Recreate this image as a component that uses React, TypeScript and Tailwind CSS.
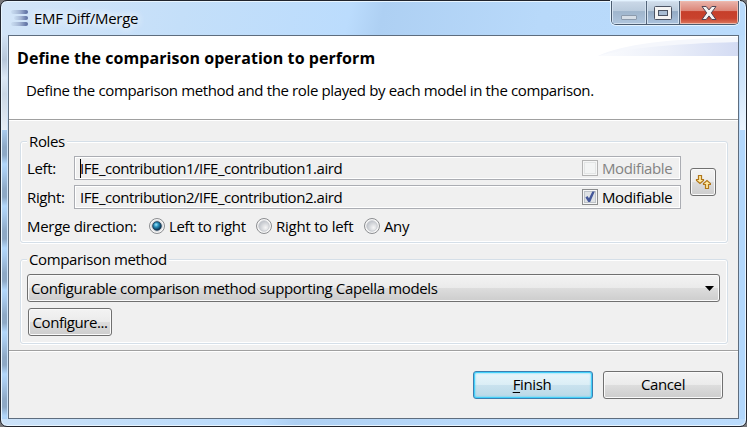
import type { ReactNode } from "react";

function Radio({ checked, label, className }: { checked?: boolean; label: string; className: string }) {
  return (
    <div className={`flex shrink-0 items-center gap-1 ${className}`}>
      <svg width="16" height="16" viewBox="0 0 16 16" className="shrink-0">
        <defs>
          <radialGradient id="radioOff" cx="0.65" cy="0.65" r="0.7">
            <stop offset="0" stopColor="#f6f6f6" />
            <stop offset="1" stopColor="#bcc0c7" />
          </radialGradient>
          <radialGradient id="radioOn" cx="0.4" cy="0.35" r="0.65">
            <stop offset="0" stopColor="#a5e5fa" />
            <stop offset="0.4" stopColor="#2a93bf" />
            <stop offset="1" stopColor="#0a2c4c" />
          </radialGradient>
        </defs>
        <circle cx="8" cy="8" r="7.5" fill="#f6f6f6" stroke="#8b8d90" />
        <circle cx="8" cy="8" r="5.3" fill="url(#radioOff)" stroke="#c5c8cd" strokeWidth="0.8" />
        {checked && <circle cx="8" cy="8" r="4.3" fill="url(#radioOn)" stroke="#123451" strokeWidth="0.8" />}
      </svg>
      <span className="whitespace-nowrap">{label}</span>
    </div>
  );
}

function Check({ checked }: { checked?: boolean }) {
  return (
    <svg width="16" height="16" viewBox="0 0 16 16" className="shrink-0">
      <rect x="0.5" y="0.5" width="15" height="15" fill="#f6f6f6" stroke={checked ? "#8c8d8e" : "#b3b3b3"} />
      <rect x="2.5" y="2.5" width="11" height="11" fill={checked ? "#dfe2e5" : "#f3f4f4"} stroke={checked ? "#bec3c9" : "#e3e5e5"} />
      {checked && <path d="M3.4 8.5 L5.4 7 L7 9.3 L10.3 2.6 L12.8 2.4 L8.2 13 L6.3 13 Z" fill="#45589a" />}
    </svg>
  );
}

function Group({ title, className, children }: { title: string; className: string; children: ReactNode }) {
  return (
    <fieldset className={`relative ml-[11px] w-[708px] rounded-[3px] border border-[#d5dfe8] shadow-[inset_0_0_0_1px_#fff,0_1px_0_#fff] ${className}`}>
      <div className="absolute -top-[11px] left-[6px] h-5 whitespace-nowrap bg-[#f0f0f0] pl-[2px] pr-[2px] leading-5">{title}</div>
      {children}
    </fieldset>
  );
}

function ModelField({ path, checked, caret }: { path: string; checked?: boolean; caret?: boolean }) {
  return (
    <div className="flex h-6 w-[607px] items-center border border-[#abadb3] pl-[5px] pr-[4px] shadow-[inset_0_0_0_1px_#fff]">
      {caret ? <div className="-mr-px h-[19px] w-px bg-black" /> : null}
      <span className="grow whitespace-nowrap tracking-[-0.46px]">{path}</span>
      <Check checked={checked} />
      <span className={`ml-[4px] w-[74px] whitespace-nowrap ${checked ? "text-black" : "text-[#838383]"}`}>Modifiable</span>
    </div>
  );
}

const face = "bg-[linear-gradient(#f3f3f3_0%,#ebebeb_48%,#dddddd_50%,#cdcdcd_100%)] border border-[#707070] shadow-[inset_0_0_0_1px_#fafafa]";

export default function App() {
  return (
    <div className="h-[427px] w-[747px] overflow-hidden bg-[#77777a] font-['Open_Sans','Noto_Sans',sans-serif] text-[15px] leading-5 tracking-[-0.37px] text-black">
      <div className="flex h-[427px] w-[747px] flex-col rounded-[7px] border border-[#20242d] bg-[linear-gradient(102deg,#d3e5f8_0%,#c4dff9_22%,#bbdcfd_42%,#aed0f3_46%,#b8d9fa_65%,#bbdcfd_100%)] shadow-[inset_0_0_0_1px_#e8f5ff]">
        <div className="flex h-[34px] shrink-0 items-start justify-between pl-[10px] pr-[7px]">
          <div className="flex pt-2">
            <svg width="18" height="18" viewBox="0 0 18 18">
              <defs>
                <linearGradient id="bars">
                  <stop offset="0" stopColor="#b4c8df" stopOpacity="0.3" />
                  <stop offset="0.5" stopColor="#a3b4d3" />
                  <stop offset="1" stopColor="#56699e" />
                </linearGradient>
              </defs>
              <rect x="0" y="1" width="17" height="4" rx="2" fill="url(#bars)" />
              <rect x="3" y="7" width="14" height="4" rx="2" fill="url(#bars)" />
              <rect x="0" y="13" width="17" height="4" rx="2" fill="url(#bars)" />
            </svg>
            <span className="-mt-px ml-[5px] whitespace-nowrap tracking-[-0.3px] [text-shadow:0_0_8px_#fff,0_0_10px_#fff]">EMF Diff/Merge</span>
          </div>
          <div className="flex h-6 w-[128px] overflow-hidden rounded-b-[5px] border border-t-0 border-[#4b5c70] shadow-[0_0_0_1px_#e4f3ff]">
            <div className="flex w-[35px] items-center justify-center border-r border-[#526479] bg-[linear-gradient(#cbd9e8_0%,#bacbdd_42%,#9fb5cc_46%,#b0c6de_100%)] pt-[9px] shadow-[inset_0_0_0_1px_#d4e2f0]">
              <div className="h-[5px] w-4 rounded-[1px] border border-[#8c9bad] bg-[#d6dee7]" />
            </div>
            <div className="flex w-[33px] items-center justify-center border-r border-[#526479] bg-[linear-gradient(#d2deeb_0%,#b9cadb_42%,#93aac3_46%,#abc3de_100%)] shadow-[inset_0_0_0_1px_#d4e2f0]">
              <svg width="18" height="14" viewBox="0 0 18 14">
                <rect x="0.5" y="0.5" width="17" height="13" rx="1" fill="#f4f4f4" stroke="#4b5363" />
                <rect x="4.5" y="4.5" width="9" height="5" fill="#a8bdd4" stroke="#4b5363" />
              </svg>
            </div>
            <div className="flex grow items-center justify-center bg-[linear-gradient(#eab5ac_0%,#dc8678_42%,#c63f2a_46%,#c9422d_75%,#dc7a61_100%)] shadow-[inset_0_0_0_1px_#eeb9ac]">
              <svg width="16" height="14" viewBox="0 0 16 14">
                <path d="M1 0.5 H5.2 L8 3.9 L10.8 0.5 H15 L10.3 6.9 L15 13.5 H10.8 L8 9.9 L5.2 13.5 H1 L5.7 6.9 Z" fill="#f4f4f4" stroke="#514554" strokeLinejoin="round" />
              </svg>
            </div>
          </div>
        </div>
        <div className="flex h-[384px] shrink-0">
          <div className="flex w-[7px] shrink-0 flex-col pl-px pr-px">
            <div className="h-[95px] bg-[linear-gradient(#d3e4f6_0%,#b7c7da_26%,#dce8f5_45%,#cbd8e6_62%,#e6edf5_100%)]" />
            <div className="grow bg-[repeating-linear-gradient(#a9cbee_0px,#8ea9c6_17px,#8ea9c6_25px,#b2d7fb_34px,#a9cbee_42px)]" />
          </div>
          <div className="flex w-[731px] shrink-0 flex-col border border-[#5e6d7e] bg-[#f0f0f0]">
            <div className="flex h-[85px] shrink-0 justify-between border-b border-white bg-white shadow-[inset_0_-1px_0_#a0a0a0]">
              <div className="shrink-0 pl-[8px] pt-[12px]">
                <div className="whitespace-nowrap text-[16px] font-bold tracking-[0.06px]">Define the comparison operation to perform</div>
                <div className="mt-[12px] whitespace-nowrap pl-[9px]">Define the comparison method and the role played by each model in the comparison.</div>
              </div>
              <svg width="140" height="20" viewBox="0 0 140 20" className="-ml-[140px] shrink-0">
                <defs>
                  <linearGradient id="swoosh">
                    <stop offset="0" stopColor="#fbfcfe" />
                    <stop offset="0.5" stopColor="#ebeff9" />
                    <stop offset="1" stopColor="#d3dbf3" />
                  </linearGradient>
                </defs>
                <path d="M0 20 C25 8 70 3 140 1 V20 Z" fill="#f5f7fc" />
                <path d="M0 20 C30 12 70 8 140 6 V20 Z" fill="url(#swoosh)" />
              </svg>
            </div>
            <Group title="Roles" className="mt-[20px] h-[102px] shrink-0">
              <div className="flex pt-[14px]">
                <div className="flex w-[53px] shrink-0 flex-col gap-[5px] pl-[6px] leading-6">
                  <span>Left:</span>
                  <span>Right:</span>
                </div>
                <div className="flex shrink-0 flex-col gap-[5px]">
                  <ModelField path="IFE_contribution1/IFE_contribution1.aird" caret />
                  <ModelField path="IFE_contribution2/IFE_contribution2.aird" checked />
                </div>
                <div className={`ml-[9px] mt-[12px] flex h-7 w-[26px] shrink-0 items-center justify-center rounded-[3px] ${face}`}>
                  <svg width="16" height="16" viewBox="0 0 16 16" fill="#ffe9a0" stroke="#b0761a" strokeWidth="1.2" strokeLinejoin="miter" className="shrink-0">
                    <path d="M3.5 1.5 H6.5 V5.5 H8.5 V6.5 L5 9.5 L1.5 6.5 V5.5 H3.5 Z" />
                    <path d="M10.5 14.5 H13.5 V10.5 H15.5 V9.5 L12 6.5 L8.5 9.5 V10.5 H10.5 Z" />
                  </svg>
                </div>
              </div>
              <div className="flex h-5 items-center pl-[6px] pt-[14px]">
                <span className="w-[122px] shrink-0 whitespace-nowrap tracking-[-0.3px]">Merge direction:</span>
                <Radio checked label="Left to right" className="w-[107px]" />
                <Radio label="Right to left" className="w-[108px] tracking-[-0.25px]" />
                <Radio label="Any" className="w-[60px]" />
              </div>
            </Group>
            <Group title="Comparison method" className="mt-[16px] h-[85px] shrink-0">
              <div className={`ml-[6px] mt-[14px] flex h-7 w-[693px] items-center justify-between rounded-[3px] pl-[3px] pr-[5px] ${face}`}>
                <span className="whitespace-nowrap pb-px tracking-[-0.35px]">Configurable comparison method supporting Capella models</span>
                <svg width="9" height="5" viewBox="0 0 9 5"><path d="M0 0 H9 L4.5 5 Z" /></svg>
              </div>
              <div className={`ml-[7px] mt-[6px] flex h-7 w-[84px] items-center justify-center rounded-[3px] ${face}`}>
                <span className="whitespace-nowrap pb-px tracking-[-0.45px]">Configure...</span>
              </div>
            </Group>
            <div className="mt-[6px] h-[2px] shrink-0 border-b border-white bg-[#a0a0a0]" />
            <div className="flex justify-end gap-[10px] pr-[15px] pt-[19px]">
              <div className="flex h-7 w-[120px] items-center justify-center rounded-[3px] border border-[#3c7fb1] bg-[linear-gradient(#eaf5fa_0%,#dbeef6_48%,#c9e2ee_50%,#b9d8e7_100%)] pb-[2px] pr-[2px] shadow-[inset_0_0_0_1px_#43d0fa,inset_0_0_2px_1px_#43d0fa]">
                <span><span className="underline decoration-1 underline-offset-2">F</span>inish</span>
              </div>
              <div className={`flex h-7 w-[120px] items-center justify-center rounded-[3px] pb-[2px] ${face}`}>Cancel</div>
            </div>
          </div>
          <div className="flex w-[7px] shrink-0 flex-col pl-px pr-px">
            <div className="h-[95px] bg-[linear-gradient(#bcdcfc_0%,#d3e7fb_55%,#ebf4fe_100%)]" />
            <div className="grow bg-[#b2d7fc]" />
          </div>
        </div>
      </div>
    </div>
  );
}
